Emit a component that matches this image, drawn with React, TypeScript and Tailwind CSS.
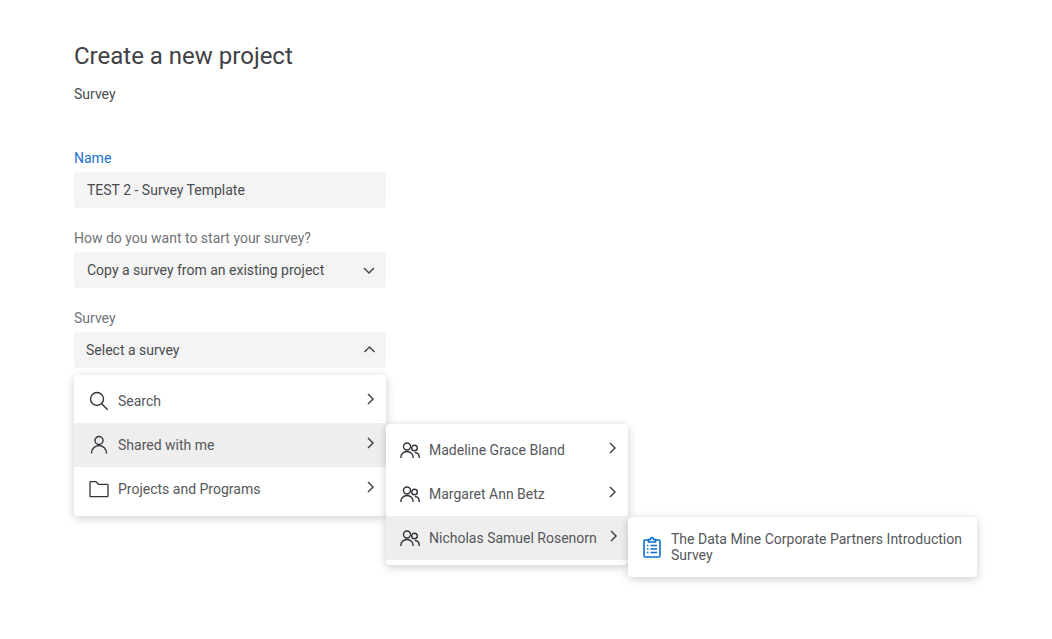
import React from "react";

const font = { fontFamily: 'Roboto, sans-serif' };

function Chevron({ dir }: { dir: "right" | "down" | "up" }) {
  const d = dir === "right" ? "M5 2l5 5-5 5" : dir === "down" ? "M2 5l5 5 5-5" : "M2.500 9l5-5 5 5";
  return (
    <svg width="14" height="14" viewBox="0 0 14 14" fill="none" stroke="#46484c" strokeWidth="1.5" className="shrink-0">
      <path d={d} />
    </svg>
  );
}

function SearchIcon() {
  return (
    <svg width="20" height="20" viewBox="0 0 20 20" fill="none" stroke="#32343a" strokeWidth="1.4">
      <circle cx="8" cy="8" r="6.5" />
      <path d="M12.700 12.700l6 6" />
    </svg>
  );
}
function UserIcon() {
  return (
    <svg width="20" height="20" viewBox="0 0 20 20" fill="none" stroke="#32343a" strokeWidth="1.4">
      <circle cx="10" cy="5.500" r="4" />
      <path d="M2.500 18.500c0-4.400 3.300-8 7.500-8s7.500 3.600 7.500 8" />
    </svg>
  );
}
function FolderIcon() {
  return (
    <svg width="20" height="20" viewBox="0 0 20 20" fill="none" stroke="#32343a" strokeWidth="1.300">
      <path d="M1 5V3.300c0-.4.300-.7.700-.7h5.300l2.400 2.700h8.800c.5 0 .8.300.8.800v10.800c0 .5-.3.800-.8.800H1.800c-.5 0-.8-.3-.8-.8z" />
    </svg>
  );
}
function UsersIcon() {
  return (
    <svg width="20" height="17" viewBox="0 0 20 17" fill="none" stroke="#32343a" strokeWidth="1.400">
      <circle cx="7" cy="4.500" r="3.500" />
      <path d="M.8 16c0-3.800 2.700-6.500 6.200-6.500s6.200 2.700 6.200 6.500" />
      <circle cx="14.500" cy="6" r="2.800" />
      <path d="M14.800 10.500c2.600 0 4.500 2.200 4.500 5.500" />
    </svg>
  );
}
function ClipboardIcon() {
  return (
    <svg width="18" height="22" viewBox="0 0 18 22" fill="none" stroke="#0b6ed0" strokeWidth="1.600" className="shrink-0">
      <path d="M5.500 4H2.500C1.600 4 1 4.600 1 5.500v14C1 20.400 1.600 21 2.500 21h13c.9 0 1.500-.6 1.500-1.500v-14C17 4.600 16.400 4 15.500 4h-3" />
      <path d="M5.500 6V3.500h2c0-2.600 3-2.600 3 0h2V6z" />
      <path d="M4 9.500h1.500M4 13h1.500M4 16.500h1.500M7.500 9.500H14M7.500 13H14M7.500 16.500H14" />
    </svg>
  );
}

function Field({ label, blue, children }: { label: string; blue?: boolean; children: React.ReactNode }) {
  return (
    <div className="flex flex-col">
      <div className={`h-[20px] mb-[4px] text-[14px] leading-[20px] ${blue ? "text-[#1a73d0]" : "text-[#717378]"}`}>{label}</div>
      {children}
    </div>
  );
}

function Box({ text, icon, pl = "pl-[12px]" }: { text: string; icon?: "down" | "up"; pl?: string }) {
  return (
    <div className={`h-[36px] w-[312px] rounded-[4px] bg-[#f4f4f4] flex items-center justify-between ${pl} pr-[10px] text-[14px] text-[#4a4c50]`}>
      <span>{text}</span>
      {icon && <Chevron dir={icon} />}
    </div>
  );
}

function Row({ icon, text, active, pl = "pl-[15px]" }: { icon: React.ReactNode; text: string; active?: boolean; pl?: string }) {
  return (
    <div className={`h-[44px] flex items-center ${pl} pr-[9px] gap-[9px] text-[14px] text-[#55575b] ${active ? "bg-[#eeeeee]" : ""}`}>
      <span className="w-[20px] flex justify-center shrink-0">{icon}</span>
      <span className="flex-1 whitespace-nowrap">{text}</span>
      <span className="-mt-[4px]"><Chevron dir="right" /></span>
    </div>
  );
}

const menu = "absolute bg-white rounded-[4px] shadow-[0_2px_10px_rgba(0,0,0,0.2)]";

export default function App() {
  return (
    <div className="relative h-[639px] w-[1052px] overflow-hidden bg-white" style={font}>
      <div className="pl-[74px] pt-[40px] w-[386px]">
        <h1 className="text-[24px] leading-[33px] text-[#3f4145]">Create a new project</h1>
        <p className="mt-[11px] text-[14px] leading-[20px] text-[#4a4c50]">Survey</p>
        <div className="mt-[44px] flex flex-col gap-[20px]">
          <Field label="Name" blue>
            <Box text="TEST 2 - Survey Template" pl="pl-[13px]" />
          </Field>
          <Field label="How do you want to start your survey?">
            <Box text="Copy a survey from an existing project" icon="down" pl="pl-[13px]" />
          </Field>
          <Field label="Survey">
            <Box text="Select a survey" icon="up" />
          </Field>
        </div>
      </div>

      <div className={`${menu} left-[74px] top-[375px] w-[312px] pt-[4px] pb-[5px]`}>
        <Row icon={<SearchIcon />} text="Search" />
        <Row icon={<UserIcon />} text="Shared with me" active />
        <Row icon={<FolderIcon />} text="Projects and Programs" />
      </div>

      <div className={`${menu} left-[386px] top-[424px] w-[242px] pt-[4px] pb-[5px]`}>
        <Row icon={<UsersIcon />} text="Madeline Grace Bland" pl="pl-[14px]" />
        <Row icon={<UsersIcon />} text="Margaret Ann Betz" pl="pl-[14px]" />
        <Row icon={<UsersIcon />} text="Nicholas Samuel Rosenorn" active pl="pl-[14px]" />
      </div>

      <div className={`${menu} left-[628px] top-[517px] w-[349px] h-[60px] flex items-center pl-[15px] pr-[10px] gap-[10px]`}>
        <ClipboardIcon />
        <span className="text-[14px] leading-[16px] text-[#55575b]">The Data Mine Corporate Partners Introduction Survey</span>
      </div>
    </div>
  );
}
